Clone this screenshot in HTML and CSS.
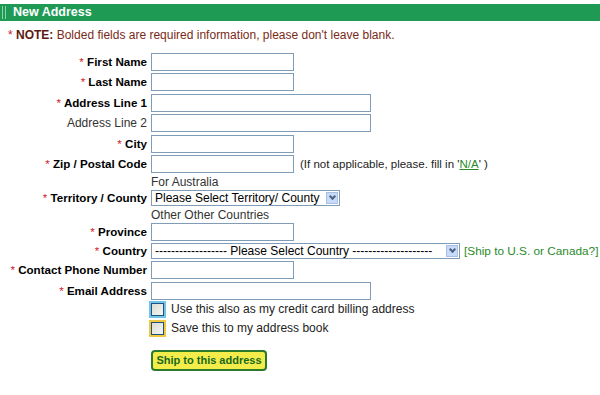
FILE: index.html
```html
<!DOCTYPE html>
<html lang="en">
  <head>
    <meta charset="utf-8">
    <title>New Address</title>
    <link rel="stylesheet" href="styles.css">
  </head>
  <body>
    <div class="panel">
      <div class="panelHead"><span class="grip"></span>New Address</div>

      <p class="note"><span class="req">*</span> <b>NOTE:</b> Bolded fields are required information, please don't leave blank.</p>

      <form class="addrForm" onsubmit="return false">
        <label class="lbl"><span class="req">*</span> First Name</label>
        <div class="ctl"><input type="text" class="txt short"></div>

        <label class="lbl"><span class="req">*</span> Last Name</label>
        <div class="ctl"><input type="text" class="txt short"></div>

        <label class="lbl"><span class="req">*</span> Address Line 1</label>
        <div class="ctl"><input type="text" class="txt long"></div>

        <label class="lbl plain">Address Line 2</label>
        <div class="ctl"><input type="text" class="txt long"></div>

        <label class="lbl"><span class="req">*</span> City</label>
        <div class="ctl"><input type="text" class="txt short"></div>

        <label class="lbl"><span class="req">*</span> Zip / Postal Code</label>
        <div class="ctl"><input type="text" class="txt short"><span class="hint">(If not applicable, please. fill in '<a href="#">N/A</a>' )</span></div>

        <div class="sub">For Australia</div>

        <label class="lbl selLbl"><span class="req">*</span> Territory / County</label>
        <div class="ctl selRow">
          <div class="sel territory"><span class="selText">Please Select Territory/ County</span><span class="selBtn"></span></div>
        </div>

        <div class="sub">Other Other Countries</div>

        <label class="lbl"><span class="req">*</span> Province</label>
        <div class="ctl"><input type="text" class="txt short"></div>

        <label class="lbl selLbl"><span class="req">*</span> Country</label>
        <div class="ctl selRow">
          <div class="sel country"><span class="selText">------------------ Please Select Country --------------------</span><span class="selBtn"></span></div>
          <a href="#" class="shipLink">[Ship to U.S. or Canada?]</a>
        </div>

        <label class="lbl"><span class="req">*</span> Contact Phone Number</label>
        <div class="ctl"><input type="text" class="txt short"></div>

        <label class="lbl"><span class="req">*</span> Email Address</label>
        <div class="ctl"><input type="text" class="txt long"></div>

        <div class="check"><span class="box blue"></span>Use this also as my credit card billing address</div>
        <div class="check second"><span class="box yellow"></span>Save this to my address book</div>

        <div class="actions"><button type="submit" class="shipBtn">Ship to this address</button></div>
      </form>
    </div>
  </body>
</html>
```

FILE: styles.css
```css
body
{
	margin: 0;
	padding-top: 4px;
	background: #FFF;
	font-family: "Liberation Sans", Arial, sans-serif;
	font-size: 12px;
	color: #000;
}
.panelHead
{
	height: 17px;
	line-height: 17px;
	background: #1E9A55;
	color: #FFF;
	font-weight: bold;
	font-size: 12.5px;
	padding-left: 13px;
	position: relative;
}
.grip
{
	position: absolute;
	left: 2px;
	top: 2px;
	width: 2px;
	height: 13px;
	border-left: 1px solid #8FD3A8;
	border-right: 1px solid #8FD3A8;
}
.note
{
	margin: 7px 0 0 8px;
	height: 14px;
	line-height: 14px;
	color: #7A2A18;
}
.note B
{
	color: #5A1A10;
}
.req
{
	color: #D0202A;
	font-weight: normal;
}
.addrForm
{
	display: grid;
	grid-template-columns: 143px 1fr;
	column-gap: 4px;
	row-gap: 2.4px;
	margin: 11px 0 0 4px;
}
.lbl
{
	text-align: right;
	font-weight: bold;
	font-size: 11.6px;
	line-height: 18px;
	white-space: nowrap;
}
.lbl.selLbl
{
	line-height: 16px;
}
.lbl.plain
{
	font-weight: normal;
	font-size: 12px;
	color: #333;
}
.ctl
{
	display: flex;
	align-items: center;
	gap: 6px;
	height: 18px;
}
.ctl.selRow
{
	height: 16px;
}
.txt
{
	box-sizing: border-box;
	height: 18px;
	border: 1px solid #7F9DB9;
	margin: 0;
	padding: 1px 3px;
	font: inherit;
}
.txt.short
{
	width: 143px;
}
.txt.long
{
	width: 220px;
}
.hint
{
	color: #222;
	font-size: 11.5px;
	white-space: nowrap;
}
.hint A
{
	color: #2A8A2A;
}
.sub
{
	grid-column: 2;
	height: 12px;
	line-height: 14px;
	color: #333;
}
.sel
{
	box-sizing: border-box;
	height: 16px;
	border: 1px solid #7F9DB9;
	display: flex;
	align-items: center;
	justify-content: space-between;
	padding-left: 3px;
	padding-right: 1px;
	color: #000;
	white-space: nowrap;
	overflow: hidden;
}
.sel.territory
{
	width: 189px;
}
.sel.country
{
	width: 309px;
}
.selBtn
{
	flex: none;
	width: 12px;
	height: 12px;
	box-sizing: border-box;
	border: 1px solid #A9BFE6;
	background: #C9DAF8;
	position: relative;
}
.selBtn:after
{
	content: "";
	position: absolute;
	left: 3px;
	top: 1px;
	width: 3px;
	height: 3px;
	border-right: 2px solid #4D6185;
	border-bottom: 2px solid #4D6185;
	transform: rotate(45deg);
}
.shipLink
{
	color: #2A8A2A;
	text-decoration: none;
	white-space: nowrap;
	margin-left: -2px;
	font-size: 11.8px;
}
.check
{
	grid-column: 2;
	display: flex;
	align-items: center;
	gap: 7px;
	height: 14px;
	color: #222;
}
.check.second
{
	margin-top: 3px;
}
.box
{
	box-sizing: border-box;
	width: 13px;
	height: 13px;
	border: 1px solid #1C5180;
	background: linear-gradient(135deg, #DCDCD6, #F6F6F2);
	box-shadow: 0 0 0 2px #6FC4E8;
}
.box.yellow
{
	box-shadow: 0 0 0 2px #F0C840;
}
.actions
{
	grid-column: 2;
	padding-top: 12px;
}
.shipBtn
{
	height: 21px;
	width: 116px;
	border: 2px solid #2D7A2D;
	border-radius: 4px;
	background: #F3EC4A;
	color: #17691F;
	font: bold 11px "Liberation Sans", Arial, sans-serif;
	padding: 0;
}
```
